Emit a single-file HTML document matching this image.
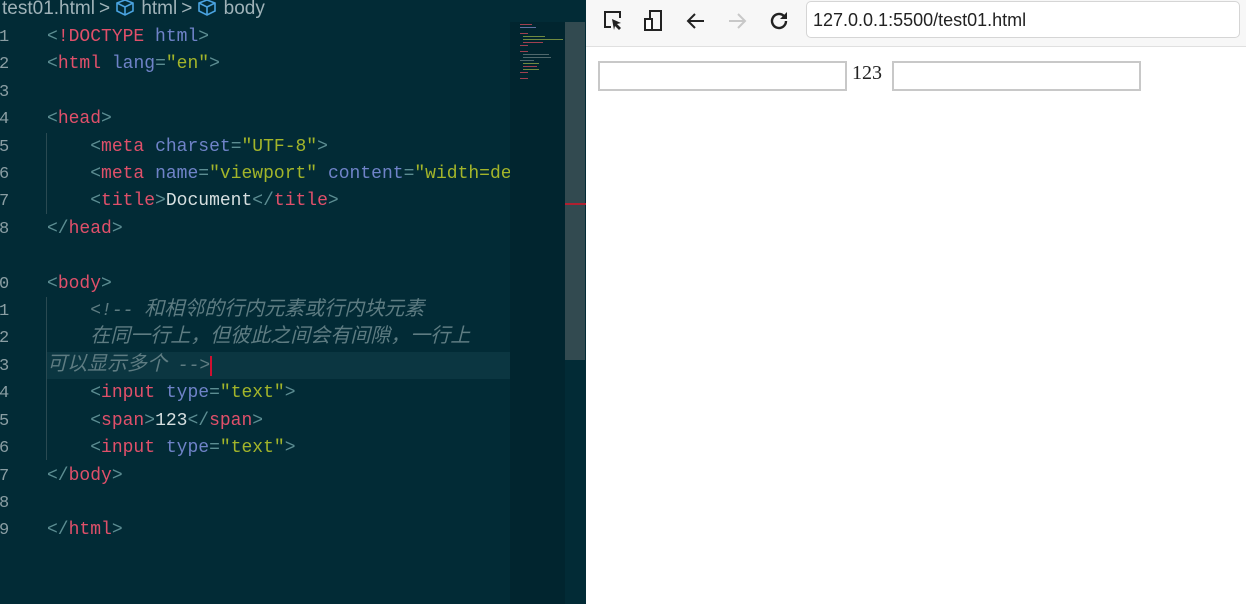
<!DOCTYPE html>
<html><head><style>
body{margin:0;width:1246px;height:604px;overflow:hidden;position:relative;background:#fff;font-family:"Liberation Sans",sans-serif}
#ed{position:absolute;left:0;top:0;width:586px;height:604px;background:#022b36}
#bc{position:absolute;left:2px;top:-2px;color:#9fb2b8;font-size:19px;white-space:nowrap}
#lns{position:absolute;left:-1px;top:24px;color:#8a9ea3;font:17px/27.4px "Liberation Mono",monospace;white-space:pre}
.cl{position:absolute;left:47px;top:24px;font:18px/27.4px "Liberation Mono","Noto Sans CJK SC",monospace;white-space:pre;color:#d6dfe0}
.b{color:#5c8d92}.t{color:#e0506a}.a{color:#6f83c8}.s{color:#a3b52a}.c{color:#5e7c82;font-style:italic}
.z{font-size:20px;line-height:20px}
.g{position:absolute;left:46px;width:1px;background:#2a4a52}
#mini{position:absolute;left:510px;top:22px;width:55px;height:582px;background:#01252f}
#th{position:absolute;left:565px;top:22px;width:20px;height:338px;background:#324a50}
#br{position:absolute;left:586px;top:0;width:660px;height:604px;background:#fff}
#tb{position:absolute;left:0;top:0;width:660px;height:46px;background:#f7f7f7;border-bottom:1px solid #e0e0e0}
#url{position:absolute;left:220px;top:1px;width:434px;height:37px;background:#fff;border:1px solid #d5d5d5;border-radius:5px;font-size:18px;line-height:36px;padding-left:6px;box-sizing:border-box;color:#222}
.in{position:absolute;top:61px;width:249px;height:30px;border:2px solid #c8c8c8;box-sizing:border-box}
.m{position:absolute;height:1px}
</style></head><body>
<div id="ed">
<div id="bc">test01.html<span style="margin:0 4px">&gt;</span><svg width="22" height="18" viewBox="0 0 22 18" style="vertical-align:-2px"><path d="M3 5l8-3 8 3v8l-8 4-8-4z M3 5l8 4 8-4 M11 9v8" fill="none" stroke="#4aa3e0" stroke-width="1.6"/></svg> html<span style="margin:0 4px">&gt;</span><svg width="22" height="18" viewBox="0 0 22 18" style="vertical-align:-2px"><path d="M3 5l8-3 8 3v8l-8 4-8-4z M3 5l8 4 8-4 M11 9v8" fill="none" stroke="#4aa3e0" stroke-width="1.6"/></svg> body</div>
<div style="position:absolute;left:47px;top:352px;width:463px;height:27px;background:#0b3641"></div>
<div class="g" style="top:133px;height:81px"></div>
<div class="g" style="top:297px;height:163px"></div>
<div id="lns">1
2
3
4
5
6
7
8

0
1
2
3
4
5
6
7
8
9</div>
<div class="cl"><span class="b">&lt;</span><span class="t">!DOCTYPE</span> <span class="a">html</span><span class="b">&gt;</span>
<span class="b">&lt;</span><span class="t">html</span> <span class="a">lang</span><span class="b">=</span><span class="s">"en"</span><span class="b">&gt;</span>

<span class="b">&lt;</span><span class="t">head</span><span class="b">&gt;</span>
    <span class="b">&lt;</span><span class="t">meta</span> <span class="a">charset</span><span class="b">=</span><span class="s">"UTF-8"</span><span class="b">&gt;</span>
    <span class="b">&lt;</span><span class="t">meta</span> <span class="a">name</span><span class="b">=</span><span class="s">"viewport"</span> <span class="a">content</span><span class="b">=</span><span class="s">"width=de</span>
    <span class="b">&lt;</span><span class="t">title</span><span class="b">&gt;</span>Document<span class="b">&lt;/</span><span class="t">title</span><span class="b">&gt;</span>
<span class="b">&lt;/</span><span class="t">head</span><span class="b">&gt;</span>

<span class="b">&lt;</span><span class="t">body</span><span class="b">&gt;</span>
    <span class="c">&lt;!-- <span class="z">和相邻的行内元素或行内块元素</span></span>
    <span class="c"><span class="z">在同一行上，但彼此之间会有间隙，一行上</span></span>
<span class="c"><span class="z">可以显示多个</span> --&gt;</span><span style="border-left:2px solid #d01030"></span>
    <span class="b">&lt;</span><span class="t">input</span> <span class="a">type</span><span class="b">=</span><span class="s">"text"</span><span class="b">&gt;</span>
    <span class="b">&lt;</span><span class="t">span</span><span class="b">&gt;</span>123<span class="b">&lt;/</span><span class="t">span</span><span class="b">&gt;</span>
    <span class="b">&lt;</span><span class="t">input</span> <span class="a">type</span><span class="b">=</span><span class="s">"text"</span><span class="b">&gt;</span>
<span class="b">&lt;/</span><span class="t">body</span><span class="b">&gt;</span>

<span class="b">&lt;/</span><span class="t">html</span><span class="b">&gt;</span></div>
<div id="mini">
<div class="m" style="left:10px;top:2px;width:12px;background:#a04050"></div>
<div class="m" style="left:10px;top:5px;width:16px;background:#6070a0"></div>
<div class="m" style="left:10px;top:11px;width:8px;background:#a04050"></div>
<div class="m" style="left:13px;top:14px;width:22px;background:#708a40"></div>
<div class="m" style="left:13px;top:17px;width:40px;background:#708a40"></div>
<div class="m" style="left:13px;top:20px;width:20px;background:#a04050"></div>
<div class="m" style="left:10px;top:23px;width:8px;background:#a04050"></div>
<div class="m" style="left:10px;top:29px;width:8px;background:#a04050"></div>
<div class="m" style="left:13px;top:32px;width:26px;background:#50686c"></div>
<div class="m" style="left:13px;top:35px;width:28px;background:#50686c"></div>
<div class="m" style="left:10px;top:38px;width:14px;background:#50686c"></div>
<div class="m" style="left:13px;top:41px;width:16px;background:#708a40"></div>
<div class="m" style="left:13px;top:44px;width:14px;background:#a04050"></div>
<div class="m" style="left:13px;top:47px;width:16px;background:#708a40"></div>
<div class="m" style="left:10px;top:50px;width:8px;background:#a04050"></div>
<div class="m" style="left:10px;top:56px;width:8px;background:#a04050"></div>
</div>
<div id="th"></div>
<div style="position:absolute;left:565px;top:203px;width:21px;height:2px;background:#b02030"></div>
</div>
<div id="br">
<div id="tb">
<svg style="position:absolute;left:16px;top:9px" width="24" height="24" viewBox="0 0 24 24"><path d="M9 18H3V3h15v6" fill="none" stroke="#222" stroke-width="2"/><path d="M10 10l9 4-4 1 4 4-2 2-4-4-1 4z" fill="#222"/></svg>
<svg style="position:absolute;left:56px;top:9px" width="24" height="24" viewBox="0 0 24 24"><rect x="8" y="2" width="11" height="19" fill="none" stroke="#222" stroke-width="2"/><rect x="3" y="10" width="7" height="11" fill="#fff" stroke="#222" stroke-width="2"/></svg>
<svg style="position:absolute;left:98px;top:9px" width="24" height="24" viewBox="0 0 24 24"><path d="M20 12H5M11 5l-7 7 7 7" fill="none" stroke="#222" stroke-width="2"/></svg>
<svg style="position:absolute;left:139px;top:9px" width="24" height="24" viewBox="0 0 24 24"><path d="M4 12h15M13 5l7 7-7 7" fill="none" stroke="#c8c8c8" stroke-width="2"/></svg>
<svg style="position:absolute;left:181px;top:9px" width="24" height="24" viewBox="0 0 24 24"><path d="M19 12a7 7 0 1 1-2.2-5.1" fill="none" stroke="#222" stroke-width="2.4"/><path d="M20 3v7h-7z" fill="#222"/></svg>
<div id="url">127.0.0.1:5500/test01.html</div>
</div>
<div class="in" style="left:12px"></div>
<div style="position:absolute;left:266px;top:62px;font:20px 'Liberation Serif',serif;color:#222">123</div>
<div class="in" style="left:306px"></div>
</div>
</body></html>
